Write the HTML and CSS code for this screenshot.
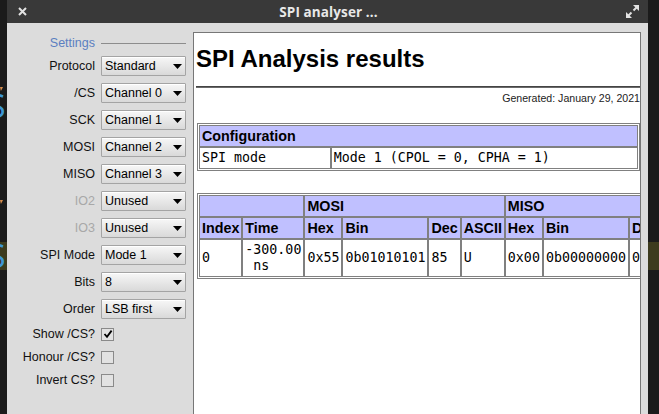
FILE: index.html
```html
<!DOCTYPE html>
<html>
<head>
<meta charset="utf-8">
<title>SPI analyser</title>
<link rel="stylesheet" href="styles.css">
</head>
<body>
<div class="screen">
  <div class="desk desk-left">
    <span class="frag frag-o1"></span>
    <span class="frag-s s1">S</span>
    <span class="frag frag-o2"></span>
    <div class="band band-l"><span class="frag-s s2">S</span></div>
  </div>
  <div class="window">
    <div class="titlebar">
      <span class="tb-left">
        <svg class="close" width="9" height="9" viewBox="0 0 9 9"><path d="M1 1 L8 8 M8 1 L1 8" stroke="#e2e2e2" stroke-width="2" fill="none"/></svg>
      </span>
      <span class="title">SPI analyser ...</span>
      <span class="tb-right">
        <svg class="max" width="13" height="13" viewBox="0 0 13 13"><path d="M7 0 H13 V6 Z" fill="#e2e2e2"/><path d="M10.5 2.5 L7.5 5.5" stroke="#e2e2e2" stroke-width="2"/><path d="M0 7 V13 H6 Z" fill="#e2e2e2"/><path d="M2.5 10.5 L5.5 7.5" stroke="#e2e2e2" stroke-width="2"/></svg>
      </span>
    </div>
    <div class="winbody">
      <div class="settings">
        <span class="lbl head">Settings</span><span class="rule"></span>

        <span class="lbl">Protocol</span>
        <div class="select"><span>Standard</span><svg width="9" height="5" viewBox="0 0 9 5"><path d="M0 0 H9 L4.5 5 Z" fill="#000"/></svg></div>

        <span class="lbl">/CS</span>
        <div class="select"><span>Channel 0</span><svg width="9" height="5" viewBox="0 0 9 5"><path d="M0 0 H9 L4.5 5 Z" fill="#000"/></svg></div>

        <span class="lbl">SCK</span>
        <div class="select"><span>Channel 1</span><svg width="9" height="5" viewBox="0 0 9 5"><path d="M0 0 H9 L4.5 5 Z" fill="#000"/></svg></div>

        <span class="lbl">MOSI</span>
        <div class="select"><span>Channel 2</span><svg width="9" height="5" viewBox="0 0 9 5"><path d="M0 0 H9 L4.5 5 Z" fill="#000"/></svg></div>

        <span class="lbl">MISO</span>
        <div class="select"><span>Channel 3</span><svg width="9" height="5" viewBox="0 0 9 5"><path d="M0 0 H9 L4.5 5 Z" fill="#000"/></svg></div>

        <span class="lbl disabled">IO2</span>
        <div class="select"><span>Unused</span><svg width="9" height="5" viewBox="0 0 9 5"><path d="M0 0 H9 L4.5 5 Z" fill="#000"/></svg></div>

        <span class="lbl disabled">IO3</span>
        <div class="select"><span>Unused</span><svg width="9" height="5" viewBox="0 0 9 5"><path d="M0 0 H9 L4.5 5 Z" fill="#000"/></svg></div>

        <span class="lbl">SPI Mode</span>
        <div class="select"><span>Mode 1</span><svg width="9" height="5" viewBox="0 0 9 5"><path d="M0 0 H9 L4.5 5 Z" fill="#000"/></svg></div>

        <span class="lbl">Bits</span>
        <div class="select"><span>8</span><svg width="9" height="5" viewBox="0 0 9 5"><path d="M0 0 H9 L4.5 5 Z" fill="#000"/></svg></div>

        <span class="lbl">Order</span>
        <div class="select"><span>LSB first</span><svg width="9" height="5" viewBox="0 0 9 5"><path d="M0 0 H9 L4.5 5 Z" fill="#000"/></svg></div>

        <span class="lbl cbrow">Show /CS?</span>
        <span class="cbcell"><span class="check"><svg width="10" height="10" viewBox="0 0 10 10"><path d="M1.5 5 L4 7.8 L8.6 1.6" stroke="#000" stroke-width="1.8" fill="none"/></svg></span></span>

        <span class="lbl cbrow">Honour /CS?</span>
        <span class="cbcell"><span class="check"></span></span>

        <span class="lbl cbrow">Invert CS?</span>
        <span class="cbcell"><span class="check"></span></span>
      </div>

      <div class="report">
        <h1 class="rep-title">SPI Analysis results</h1>
        <div class="rep-rule"></div>
        <div class="generated">Generated: January 29, 2021</div>

        <table class="tbl config">
          <tr><th colspan="2">Configuration</th></tr>
          <tr><td class="c1">SPI mode</td><td>Mode 1 (CPOL = 0, CPHA = 1)</td></tr>
        </table>

        <table class="tbl data">
          <tr><th colspan="2"></th><th colspan="4">MOSI</th><th colspan="4">MISO</th></tr>
          <tr><th>Index</th><th>Time</th><th>Hex</th><th>Bin</th><th>Dec</th><th>ASCII</th><th>Hex</th><th>Bin</th><th>Dec</th><th>ASCII</th></tr>
          <tr><td>0</td><td>-300.00<br>&nbsp;ns</td><td>0x55</td><td>0b01010101</td><td>85</td><td>U</td><td>0x00</td><td>0b00000000</td><td>0</td><td></td></tr>
        </table>
      </div>
      <div class="gutter"></div>
    </div>
  </div>
  <div class="desk desk-right"><div class="band band-r"></div></div>
</div>
</body>
</html>
```

FILE: styles.css
```css
* { box-sizing: border-box; }

html, body {
  margin: 0;
  padding: 0;
  background: #1b1b1b;
}

.screen {
  display: flex;
  width: 659px;
  height: 414px;
  overflow: hidden;
  font-family: "Liberation Sans", Arial, sans-serif;
}

/* desktop strips */
.desk {
  position: relative;
  background: #1b1b1b;
  height: 414px;
  overflow: hidden;
}
.desk-left { width: 7px; }
.desk-right { width: 11px; }

.frag {
  position: absolute;
  background: #d98f4e;
}
.frag-o1 { left: 0; top: 87px; width: 3px; height: 4px; clip-path: polygon(0 0, 100% 0, 30% 100%); }
.frag-o2 { left: 0; top: 200px; width: 3px; height: 4px; clip-path: polygon(0 0, 100% 0, 30% 100%); }

.frag-s {
  position: absolute;
  left: -12px;
  font-family: "Open Sans", sans-serif;
  font-size: 32px;
  line-height: 32px;
  color: #3d96d4;
}
.s1 { top: 90px; }
.s2 { top: -2px; }

.band {
  position: absolute;
  left: 0;
  top: 242px;
  height: 28px;
  width: 100%;
  background: #3d3b1e;
  overflow: hidden;
}

/* window */
.window {
  width: 641px;
  height: 414px;
  display: flex;
  flex-direction: column;
}

.titlebar {
  height: 23px;
  background: #393939;
  display: grid;
  grid-template-columns: 1fr auto 1fr;
  align-items: center;
  padding: 0 9px 0 11px;
}
.tb-left { display: flex; align-items: center; }
.tb-right { display: flex; justify-content: flex-end; align-items: center; }
.close { display: block; }
.max { display: block; }
.title {
  font-family: "Open Sans", "Noto Sans", sans-serif;
  font-weight: 700;
  font-size: 13.5px;
  color: #e8e8e8;
  letter-spacing: 0.1px;
}

.winbody {
  flex: 1;
  display: flex;
  background: #dcdcdc;
  min-height: 0;
}

/* settings */
.settings {
  width: 186px;
  flex: none;
  display: grid;
  grid-template-columns: 88px 85px;
  grid-template-rows: 12px repeat(10, 20px) repeat(3, 16px);
  column-gap: 6px;
  row-gap: 7px;
  padding-top: 14px;
  align-content: start;
  font-size: 12.5px;
  color: #111;
}
.lbl {
  text-align: right;
  align-self: center;
  white-space: nowrap;
  line-height: 14px;
}
.lbl.head { color: #5b7fc1; }
.lbl.disabled { color: #a8a8a8; }
.rule {
  align-self: center;
  height: 1px;
  background: #8c8c8c;
  margin-top: 1px;
}

.select {
  display: flex;
  align-items: center;
  justify-content: space-between;
  height: 20px;
  border: 1px solid #a4a4a4;
  border-radius: 1px;
  background: linear-gradient(#f7f7f7, #d9d9d9);
  box-shadow: inset 0 1px 0 #ffffff;
  padding: 0 3px 0 3px;
  color: #000;
  white-space: nowrap;
}
.select svg { display: block; margin-top: 1px; }

.cbcell { display: flex; align-items: center; }
.check {
  width: 13px;
  height: 13px;
  border: 1px solid #8a8a8a;
  background: #e2e2e2;
  display: flex;
  align-items: center;
  justify-content: center;
}
.check svg { display: block; }

/* report panel */
.report {
  width: 448px;
  flex: none;
  margin-top: 9px;
  background: #fff;
  border: 1px solid #777;
  border-bottom: none;
  padding-left: 2px;
  overflow: hidden;
  color: #000;
}
.gutter { width: 7px; flex: none; }

.rep-title {
  margin: 12px 0 0 0;
  font-size: 24px;
  line-height: 28px;
  font-weight: 700;
  white-space: nowrap;
}
.rep-rule {
  margin-top: 13px;
  height: 2px;
  border-top: 1px solid #444;
  border-bottom: 1px solid #6a6a6a;
}
.generated {
  margin-top: 4px;
  text-align: right;
  font-size: 10.6px;
  line-height: 12px;
  color: #222;
  white-space: nowrap;
}

.tbl {
  border: 1px solid #808080;
  padding: 1px;
  border-spacing: 0;
  margin-left: 1px;
}
.tbl th, .tbl td {
  border: 1px solid #808080;
  padding: 2px 2px;
  line-height: 16px;
  text-align: left;
}
.tbl th {
  background: #c0c0ff;
  font-weight: 700;
  font-size: 14.3px;
  white-space: nowrap;
}
.tbl td {
  font-family: "DejaVu Sans Mono", monospace;
  font-size: 13.3px;
  background: #fff;
}
.config {
  width: 443px;
  margin-top: 19px;
}
.config .c1 { width: 30%; }
.data {
  margin-top: 22px;
}
```
